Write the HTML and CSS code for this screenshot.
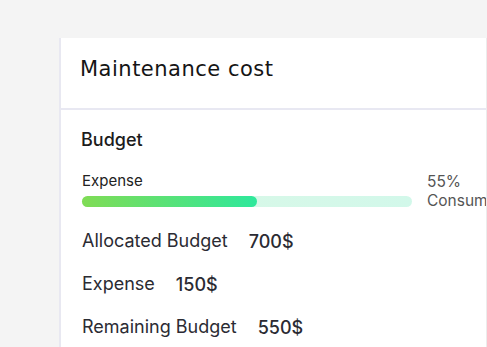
FILE: index.html
```html
<!DOCTYPE html>
<html lang="en">
<head>
    <meta charset="UTF-8">
    <meta name="viewport" content="width=device-width, initial-scale=1.0">
    <title>Maintenance cost</title>
    <link rel="stylesheet" href="styles.css">
</head>
<body>
    <div class="card">
        <div class="card-header">
            <h1>Maintenance cost</h1>
        </div>
        <div class="card-body">
            <h2>Budget</h2>
            <div class="progress-row">
                <div class="progress-main">
                    <div class="progress-label">Expense</div>
                    <div class="progress-track">
                        <div class="progress-fill" style="width: 53%"></div>
                    </div>
                </div>
                <div class="progress-percent">55%<br>Consumed</div>
            </div>
            <div class="stat">
                <span class="stat-label">Allocated Budget</span>
                <span class="stat-value">700$</span>
            </div>
            <div class="stat">
                <span class="stat-label">Expense</span>
                <span class="stat-value">150$</span>
            </div>
            <div class="stat">
                <span class="stat-label">Remaining Budget</span>
                <span class="stat-value">550$</span>
            </div>
        </div>
    </div>
</body>
</html>
```

FILE: styles.css
```css
body {
    font-family: Inter, "Liberation Sans", sans-serif;
    background-color: #f4f4f4;
    margin: 0;
    padding: 38px 0 0 59px;
    overflow: hidden;
    height: 347px;
    box-sizing: border-box;
}

.card {
    width: 425px;
    height: 100%;
    background: #fff;
    border-left: 2px solid #e8e8f1;
    border-right: 1px solid #ececec;
    overflow: hidden;
}

.card-header {
    height: 51px;
    padding: 19px 19px 0;
    border-bottom: 2px solid #e8e8f2;
}

h1 {
    margin: 0;
    font-family: "DejaVu Sans", sans-serif;
    font-weight: 400;
    font-size: 21px;
    letter-spacing: 0.5px;
    line-height: 24px;
    color: #151515;
}

.card-body {
    padding: 19px 0 0 20px;
}

h2 {
    margin: 0;
    font-size: 18px;
    line-height: 22px;
    font-weight: 500;
    color: #1c1c1c;
}

.progress-row {
    display: flex;
    gap: 15px;
    margin-top: 21px;
    white-space: nowrap;
}

.progress-main {
    flex-shrink: 0;
    width: 330px;
    padding-left: 1px;
}

.progress-label {
    font-size: 15px;
    line-height: 18px;
    color: #222;
}

.progress-track {
    margin-top: 6px;
    height: 11px;
    border-radius: 6px;
    background: linear-gradient(90deg, #dcf8e6, #d2f8ea);
}

.progress-fill {
    height: 100%;
    border-radius: 6px;
    background: linear-gradient(90deg, #80dc55, #2ee89c);
}

.progress-percent {
    font-size: 15.5px;
    line-height: 19px;
    color: #555;
}

.stat {
    display: flex;
    align-items: center;
    gap: 21px;
    height: 43px;
    padding-left: 1px;
}

.progress-row + .stat {
    margin-top: 9px;
}

.stat-label {
    font-size: 18px;
    line-height: 22px;
    color: #2b2b33;
}

.stat-value {
    font-size: 18px;
    line-height: 22px;
    font-weight: 500;
    color: #2b2b33;
    margin-top: 3px;
}
```
